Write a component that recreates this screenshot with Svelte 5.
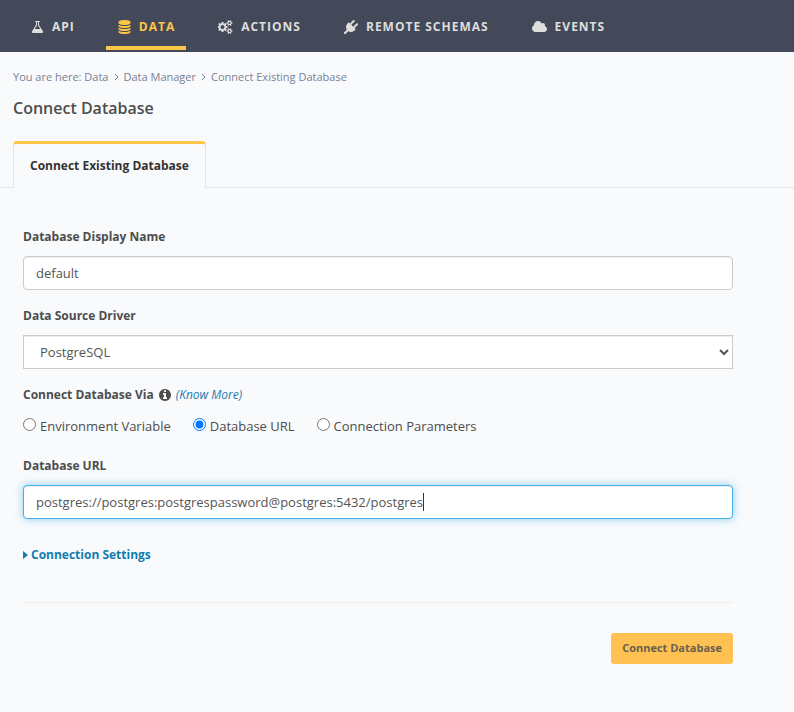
<script lang="ts">
	import { onMount } from 'svelte';

	const icons = {
		flask: 'M1591 1448q56 89 21.5 152.5t-140.5 63.5h-1152q-106 0-140.5-63.5t21.5-152.5l503-793v-399h-64q-26 0-45-19t-19-45 19-45 45-19h512q26 0 45 19t19 45-19 45-45 19h-64v399zm-779-725l-272 429h712l-272-429-20-31v-436h-128v436z',
		database: 'M896 768q237 0 443-43t325-127v170q0 69-103 128t-280 93.5-385 34.5-385-34.5-280-93.5-103-128v-170q119 84 325 127t443 43zm0 768q237 0 443-43t325-127v170q0 69-103 128t-280 93.5-385 34.5-385-34.5-280-93.5-103-128v-170q119 84 325 127t443 43zm0-384q237 0 443-43t325-127v170q0 69-103 128t-280 93.5-385 34.5-385-34.5-280-93.5-103-128v-170q119 84 325 127t443 43zm0-1152q208 0 385 34.5t280 93.5 103 128v128q0 69-103 128t-280 93.5-385 34.5-385-34.5-280-93.5-103-128v-128q0-69 103-128t280-93.5 385-34.5z',
		cogs: 'M832 896q0-106-75-181t-181-75-181 75-75 181 75 181 181 75 181-75 75-181zm768 512q0-52-38-90t-90-38-90 38-38 90q0 53 37.5 90.5t90.5 37.5 90.5-37.5 37.5-90.5zm0-1024q0-52-38-90t-90-38-90 38-38 90q0 53 37.5 90.5t90.5 37.5 90.5-37.5 37.5-90.5zm-384 421v185q0 10-7 19.5t-16 10.5l-155 24q-11 35-32 76 34 48 90 115 7 11 7 20 0 12-7 19-23 30-82.5 89.5t-78.5 59.5q-11 0-21-7l-115-90q-37 19-77 31-11 108-23 155-7 24-30 24h-186q-11 0-20-7.5t-10-17.5l-23-153q-34-10-75-31l-118 89q-7 7-20 7-11 0-21-8-144-133-144-160 0-9 7-19 10-14 41-53t47-61q-23-44-35-82l-152-24q-10-1-17-9.5t-7-19.5v-185q0-10 7-19.5t16-10.5l155-24q11-35 32-76-34-48-90-115-7-11-7-20 0-12 7-20 22-30 82-89t79-59q11 0 21 7l115 90q34-18 77-32 11-108 23-154 7-24 30-24h186q11 0 20 7.5t10 17.5l23 153q34 10 75 31l118-89q8-7 20-7 11 0 21 8 144 133 144 160 0 8-7 19-12 16-42 54t-45 60q23 48 34 82l152 23q10 2 17 10.5t7 19.5zm640 533v140q0 16-149 31-12 27-30 52 51 113 51 138 0 4-4 7-122 71-124 71-8 0-46-47t-52-68q-20 2-30 2t-30-2q-14 21-52 68t-46 47q-2 0-124-71-4-3-4-7 0-25 51-138-18-25-30-52-149-15-149-31v-140q0-16 149-31 13-29 30-52-51-113-51-138 0-4 4-7 4-2 35-20t59-34 30-16q8 0 46 46.5t52 67.5q20-2 30-2t30 2q51-71 92-112l6-2q4 0 124 70 4 3 4 7 0 25-51 138 17 23 30 52 149 15 149 31zm0-1024v140q0 16-149 31-12 27-30 52 51 113 51 138 0 4-4 7-122 71-124 71-8 0-46-47t-52-68q-20 2-30 2t-30-2q-14 21-52 68t-46 47q-2 0-124-71-4-3-4-7 0-25 51-138-18-25-30-52-149-15-149-31v-140q0-16 149-31 13-29 30-52-51-113-51-138 0-4 4-7 4-2 35-20t59-34 30-16q8 0 46 46.5t52 67.5q20-2 30-2t30 2q51-71 92-112l6-2q4 0 124 70 4 3 4 7 0 25-51 138 17 23 30 52 149 15 149 31z',
		plug: 'M1755 453q37 38 37 90.5t-37 90.5l-401 400 150 150-160 160q-163 163-389.5 186.5t-411.5-100.5l-362 362h-181v-181l362-362q-124-185-100.5-411.5t186.5-389.5l160-160 150 150 400-401q38-37 91-37t90 37 37 90.5-37 90.5l-400 401 234 234 401-400q38-37 91-37t90 37z',
		cloud: 'M1984 1152q0 159-112.5 271.5t-271.5 112.5h-1088q-185 0-316.5-131.5t-131.5-316.5q0-132 71-241.5t187-163.5q-2-28-2-43 0-212 150-362t362-150q158 0 286.5 88t187.5 230q70-62 166-62 106 0 181 75t75 181q0 75-41 138 129 30 213 134.5t84 239.5z',
		info: 'M1152 1376v-160q0-14-9-23t-23-9h-96v-512q0-14-9-23t-23-9h-320q-14 0-23 9t-9 23v160q0 14 9 23t23 9h96v320h-96q-14 0-23 9t-9 23v160q0 14 9 23t23 9h448q14 0 23-9t9-23zm-128-896v-160q0-14-9-23t-23-9h-192q-14 0-23 9t-9 23v160q0 14 9 23t23 9h192q14 0 23-9t9-23zm640 416q0 209-103 385.5t-279.5 279.5-385.5 103-385.5-103-279.5-279.5-103-385.5 103-385.5 279.5-279.5 385.5-103 385.5 103 279.5 279.5 103 385.5z'
	};

	const navItems = [
		{ label: 'API', icon: icons.flask, box: '128 0 1536 1792', width: 13 },
		{ label: 'DATA', icon: icons.database, box: '128 0 1536 1792', width: 13 },
		{ label: 'ACTIONS', icon: icons.cogs, box: '0 0 1920 1792', width: 15 },
		{ label: 'REMOTE SCHEMAS', icon: icons.plug, box: '0 0 1792 1792', width: 14 },
		{ label: 'EVENTS', icon: icons.cloud, box: '64 0 1920 1792', width: 15 }
	];

	const methods = ['Environment Variable', 'Database URL', 'Connection Parameters'];

	let active = $state('DATA');
	let displayName = $state('default');
	let driver = $state('PostgreSQL');
	let method = $state('Database URL');
	let url = $state('postgres://postgres:postgrespassword@postgres:5432/postgres');
	let urlInput: HTMLInputElement;
	let caret = $state(0);

	// The caret is drawn as a background line, so it stays solid instead of blinking
	function moveCaret() {
		const ctx = document.createElement('canvas').getContext('2d');
		if (!ctx) return;
		ctx.font = getComputedStyle(urlInput).font;
		caret = Math.round(ctx.measureText(url.slice(0, urlInput.selectionEnd ?? url.length)).width);
	}

	onMount(() => {
		urlInput.focus();
		urlInput.setSelectionRange(url.length, url.length);
		moveCaret();
	});
</script>

<nav>
	{#each navItems as item}
		<a href="#{item.label}" class:active={active === item.label} onclick={() => (active = item.label)}>
			<svg viewBox={item.box} width={item.width} height="14" aria-hidden="true"><path d={item.icon} /></svg>
			{item.label}
		</a>
	{/each}
</nav>

<main>
	<div class="breadcrumb">
		<span>You are here: <a href="#data">Data</a></span>
		<svg viewBox="0 0 5 8" width="5" height="8" aria-hidden="true"><path d="M1 1l3 3-3 3" /></svg>
		<a href="#manager">Data Manager</a>
		<svg viewBox="0 0 5 8" width="5" height="8" aria-hidden="true"><path d="M1 1l3 3-3 3" /></svg>
		<span>Connect Existing Database</span>
	</div>

	<h1>Connect Database</h1>

	<div class="tabs">
		<a href="#connect" class="tab">Connect Existing Database</a>
	</div>

	<form onsubmit={(e) => e.preventDefault()}>
		<label class="title" for="name">Database Display Name</label>
		<input class="control" type="text" id="name" bind:value={displayName} />

		<label class="title" for="driver">Data Source Driver</label>
		<select class="control" id="driver" bind:value={driver}>
			<option>PostgreSQL</option>
		</select>

		<div class="title via" id="via">
			Connect Database Via
			<svg viewBox="128 128 1536 1536" width="12" height="12" aria-hidden="true"><path d={icons.info} /></svg>
			<a href="#docs">(Know More)</a>
		</div>
		<div class="radios" role="radiogroup" aria-labelledby="via">
			{#each methods as option}
				<label>
					<input type="radio" name="method" value={option} bind:group={method} />
					{option}
				</label>
			{/each}
		</div>

		<label class="title" for="url">Database URL</label>
		<input
			class="control url"
			type="text"
			id="url"
			spellcheck="false"
			style:--caret="{caret}px"
			bind:value={url}
			bind:this={urlInput}
			oninput={moveCaret}
			onkeyup={moveCaret}
			onclick={moveCaret}
		/>

		<button type="button" class="settings">
			<svg viewBox="0 0 5 8" width="5" height="8" aria-hidden="true"><path d="M0 0l5 4-5 4z" /></svg>
			Connection Settings
		</button>

		<div class="footer">
			<button type="submit" class="submit">Connect Database</button>
		</div>
	</form>
</main>

<style>
	:global(body) {
		background: #f8fafc;
		color: #4d4d4d;
		font-family: 'Open Sans', 'Noto Sans', sans-serif;
		font-size: 13px;
		line-height: 20px;
	}

	svg {
		fill: currentColor;
		flex: none;
	}

	nav {
		display: flex;
		gap: 20px;
		height: 52px;
		box-sizing: border-box;
		padding: 0 19px 2px;
		background: #434958;
		font-size: 12px;
	}

	nav a {
		display: flex;
		align-items: center;
		gap: 8px;
		padding: 7px 11px 0 12px;
		border-bottom: 4px solid transparent;
		color: #dedede;
		font-weight: bold;
		letter-spacing: 1px;
		text-decoration: none;
		white-space: nowrap;
	}

	nav a.active {
		color: #ffc547;
		border-color: #ffc547;
	}

	.breadcrumb {
		display: flex;
		align-items: center;
		gap: 5px;
		padding: 15px 13px 0;
		color: #788095;
		font-size: 11px;
	}

	.breadcrumb a {
		color: inherit;
		text-decoration: none;
	}

	.breadcrumb svg {
		fill: none;
		stroke: currentColor;
	}

	h1 {
		margin: 9px 13px 21px;
		font-size: 16px;
		font-weight: 600;
		line-height: 24px;
	}

	.tabs {
		display: flex;
		padding: 0 13px;
		border-bottom: 1px solid #e3e5e7;
	}

	.tab {
		margin-bottom: -1px;
		padding: 12px 16px;
		border: 1px solid #e3e5e7;
		border-top: 3px solid #ffc547;
		border-bottom: 0;
		border-radius: 4px 4px 0 0;
		background: #f8fafc;
		color: #333;
		font-size: 12px;
		font-weight: bold;
		text-decoration: none;
	}

	form {
		padding: 38px 61px 48px 23px;
	}

	.title {
		display: block;
		margin-bottom: 8px;
		font-size: 12px;
		font-weight: bold;
		line-height: 22px;
	}

	.control {
		display: block;
		width: 100%;
		height: 34px;
		box-sizing: border-box;
		margin-bottom: 15px;
		padding: 6px 12px;
		border: 1px solid #ccc;
		border-radius: 4px;
		background: #fff;
		box-shadow: inset 0 1px 1px rgba(0, 0, 0, 0.075);
		color: #555;
		font: inherit;
	}

	select.control {
		border-radius: 0;
	}

	.control:focus {
		border-color: #43b0e6;
		outline: 0;
		box-shadow: inset 0 1px 1px rgba(0, 0, 0, 0.075), 0 0 8px rgba(67, 176, 230, 0.6);
	}

	.url:focus {
		background: linear-gradient(#333, #333) var(--caret) center / 1px 18px no-repeat content-box #fff;
		background-clip: border-box;
		caret-color: transparent;
	}

	.via {
		display: flex;
		align-items: center;
		gap: 5px;
	}

	.via a {
		color: #1c7cb0;
		font-style: italic;
		font-weight: normal;
		text-decoration: none;
	}

	.radios {
		display: flex;
		gap: 22px;
		margin-bottom: 19px;
		padding-top: 2px;
	}

	.radios label {
		display: flex;
		gap: 4px;
	}

	.radios input {
		width: 13px;
		height: 13px;
		margin: 2px 0;
	}

	button {
		border: 0;
		font: inherit;
		font-size: 12px;
		font-weight: bold;
		cursor: pointer;
	}

	.settings {
		display: flex;
		align-items: center;
		gap: 3px;
		margin-top: 25px;
		padding: 0;
		background: none;
		color: #107cb0;
		line-height: 22px;
	}

	.footer {
		display: flex;
		justify-content: flex-end;
		margin-top: 36px;
		padding-top: 30px;
		border-top: 1px solid #eee;
	}

	.submit {
		padding: 5px 11px 6px;
		border-radius: 3px;
		background: #ffc252;
		color: #686050;
		font-size: 11px;
	}
</style>
